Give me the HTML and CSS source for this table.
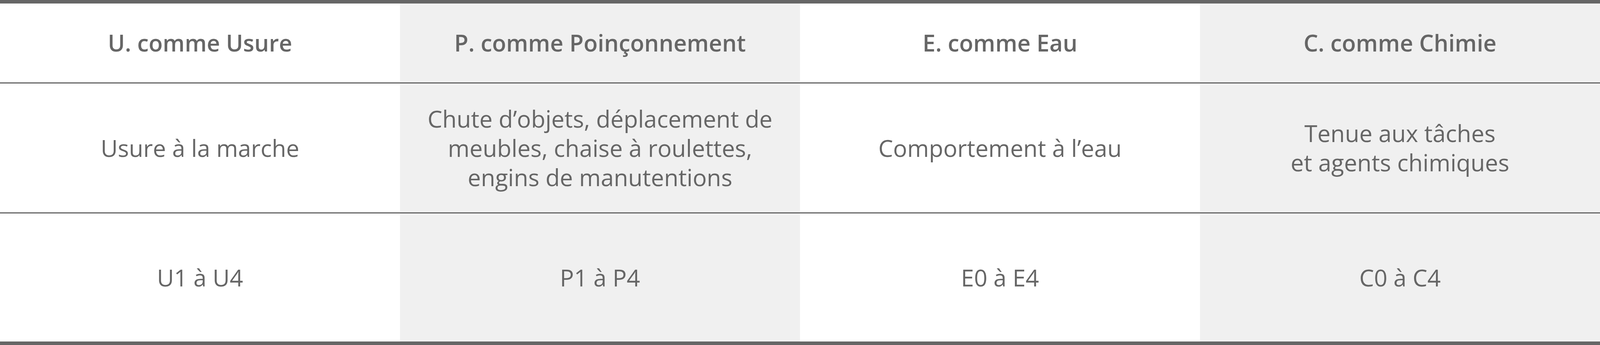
FILE: index.html
```html
<!DOCTYPE html>
<html lang="fr">
<head>
<meta charset="utf-8">
<title>Normes UPEC</title>
<link rel="stylesheet" href="styles.css">
</head>
<body>
<div class="upec">
  <div class="cell head">U. comme Usure</div>
  <div class="cell head alt">P. comme Poinçonnement</div>
  <div class="cell head">E. comme Eau</div>
  <div class="cell head alt">C. comme Chimie</div>

  <div class="cell desc">Usure à la marche</div>
  <div class="cell desc alt">Chute d’objets, déplacement de<br>meubles, chaise à roulettes,<br>engins de manutentions</div>
  <div class="cell desc">Comportement à l’eau</div>
  <div class="cell desc alt">Tenue aux tâches<br>et agents chimiques</div>

  <div class="cell cls">U1 à U4</div>
  <div class="cell cls alt">P1 à P4</div>
  <div class="cell cls">E0 à E4</div>
  <div class="cell cls alt">C0 à C4</div>
</div>
</body>
</html>
```

FILE: styles.css
```css
html, body {
  margin: 0;
  padding: 0;
  background: #ffffff;
}

.upec {
  display: grid;
  grid-template-columns: repeat(4, 1fr);
  grid-template-rows: 205px 333px 328px;
  border-top: 9px solid #666666;
  border-bottom: 9px solid #666666;
  font-family: "Open Sans", "Noto Sans", sans-serif;
  color: #666666;
}

.cell {
  box-sizing: border-box;
  display: flex;
  align-items: center;
  justify-content: center;
  text-align: center;
}

.alt {
  background: #f0f0f0;
}

.head {
  font-size: 59px;
  font-weight: 600;
  line-height: 1.15;
  border-bottom: 3px solid #666666;
}

.desc {
  font-size: 60px;
  font-weight: 400;
  line-height: 75px;
  border-bottom: 3px solid #666666;
}

.cls {
  font-size: 60px;
  font-weight: 400;
  line-height: 75px;
}
```
